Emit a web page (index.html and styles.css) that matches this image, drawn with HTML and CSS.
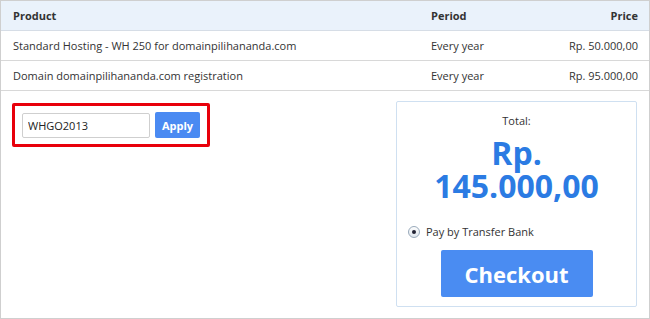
FILE: index.html
```html
<!DOCTYPE html>
<html>
<head>
<meta charset="utf-8">
<link rel="stylesheet" href="styles.css">
</head>
<body>
<div class="cart">
  <div class="row head">
    <div class="c-product">Product</div>
    <div class="c-period">Period</div>
    <div class="c-price">Price</div>
  </div>
  <div class="row">
    <div class="c-product">Standard Hosting - WH 250 for domainpilihananda.com</div>
    <div class="c-period">Every year</div>
    <div class="c-price">Rp. 50.000,00</div>
  </div>
  <div class="row">
    <div class="c-product">Domain domainpilihananda.com registration</div>
    <div class="c-period">Every year</div>
    <div class="c-price">Rp. 95.000,00</div>
  </div>
  <div class="bottom">
    <div class="promo">
      <input class="code" type="text" value="WHGO2013">
      <button class="apply">Apply</button>
    </div>
    <div class="total">
      <div class="total-label">Total:</div>
      <div class="total-amount">
        <div class="amount-line">Rp.</div>
        <div class="amount-line">145.000,00</div>
      </div>
      <label class="pay"><span class="radio"><span class="dot"></span></span>Pay by Transfer Bank</label>
      <button class="checkout">Checkout</button>
    </div>
  </div>
</div>
</body>
</html>
```
FILE: styles.css
```css
* { box-sizing: border-box; }
html, body { margin: 0; padding: 0; background: #fff; }
body { font-family: "Open Sans", "Noto Sans", sans-serif; font-size: 11px; color: #333; }
.cart {
  width: 650px;
  height: 319px;
  border: 1px solid #cfcfcf;
}
.row {
  display: flex;
  align-items: center;
  height: 30px;
  border-bottom: 1px solid #d8d8d8;
  padding: 0 11px 0 12px;
}
.row.head {
  height: 30px;
  background: #eaf2fb;
  font-weight: bold;
  color: #333;
  border-bottom-color: #d6dde6;
}
.c-product { flex: 1; }
.c-period { width: 120px; }
.c-price { width: 87px; text-align: right; }
.bottom {
  display: flex;
  justify-content: space-between;
  align-items: flex-start;
  padding: 10px 12px 0 11px;
}
.promo {
  display: flex;
  align-items: center;
  gap: 5px;
  border: 3px solid #e8000b;
  border-radius: 2px;
  padding: 6px 7px;
  margin-top: 2px;
}
.code {
  width: 128px;
  height: 25px;
  border: 1px solid #cfcfcf;
  border-radius: 2px;
  padding: 0 5px;
  font-family: "Open Sans", "Noto Sans", sans-serif;
  font-size: 11px;
  color: #222;
  outline: none;
}
.apply {
  width: 45px;
  height: 26px;
  border: 0;
  border-radius: 2px;
  background: #4a8af2;
  color: #fff;
  font-family: "Open Sans", "Noto Sans", sans-serif;
  font-weight: bold;
  font-size: 11px;
  padding: 0;
}
.total {
  width: 241px;
  height: 206px;
  border: 1px solid #cfe0f1;
  border-radius: 2px;
  display: flex;
  flex-direction: column;
  align-items: center;
  padding-top: 11px;
}
.total-label { line-height: 15px; color: #333; }
.total-amount {
  margin-top: 8px;
  font-size: 32px;
  font-weight: bold;
  color: #2b7be3;
  text-align: center;
}
.amount-line { line-height: 33px; }
.pay {
  align-self: flex-start;
  display: flex;
  align-items: center;
  margin: 22px 0 0 11px;
  line-height: 16px;
  color: #333;
}
.radio {
  width: 12px;
  height: 12px;
  border-radius: 50%;
  border: 1px solid #9ab;
  background: linear-gradient(#fdfdfd, #dfe6ee);
  display: flex;
  align-items: center;
  justify-content: center;
  margin-right: 6px;
}
.dot {
  width: 4px;
  height: 4px;
  border-radius: 50%;
  background: #223;
}
.checkout {
  margin-top: 10px;
  width: 152px;
  height: 47px;
  border: 0;
  border-radius: 2px;
  background: #4a8cf2;
  color: #fff;
  font-family: "Open Sans", "Noto Sans", sans-serif;
  font-weight: bold;
  font-size: 22px;
  padding: 0;
}
```
